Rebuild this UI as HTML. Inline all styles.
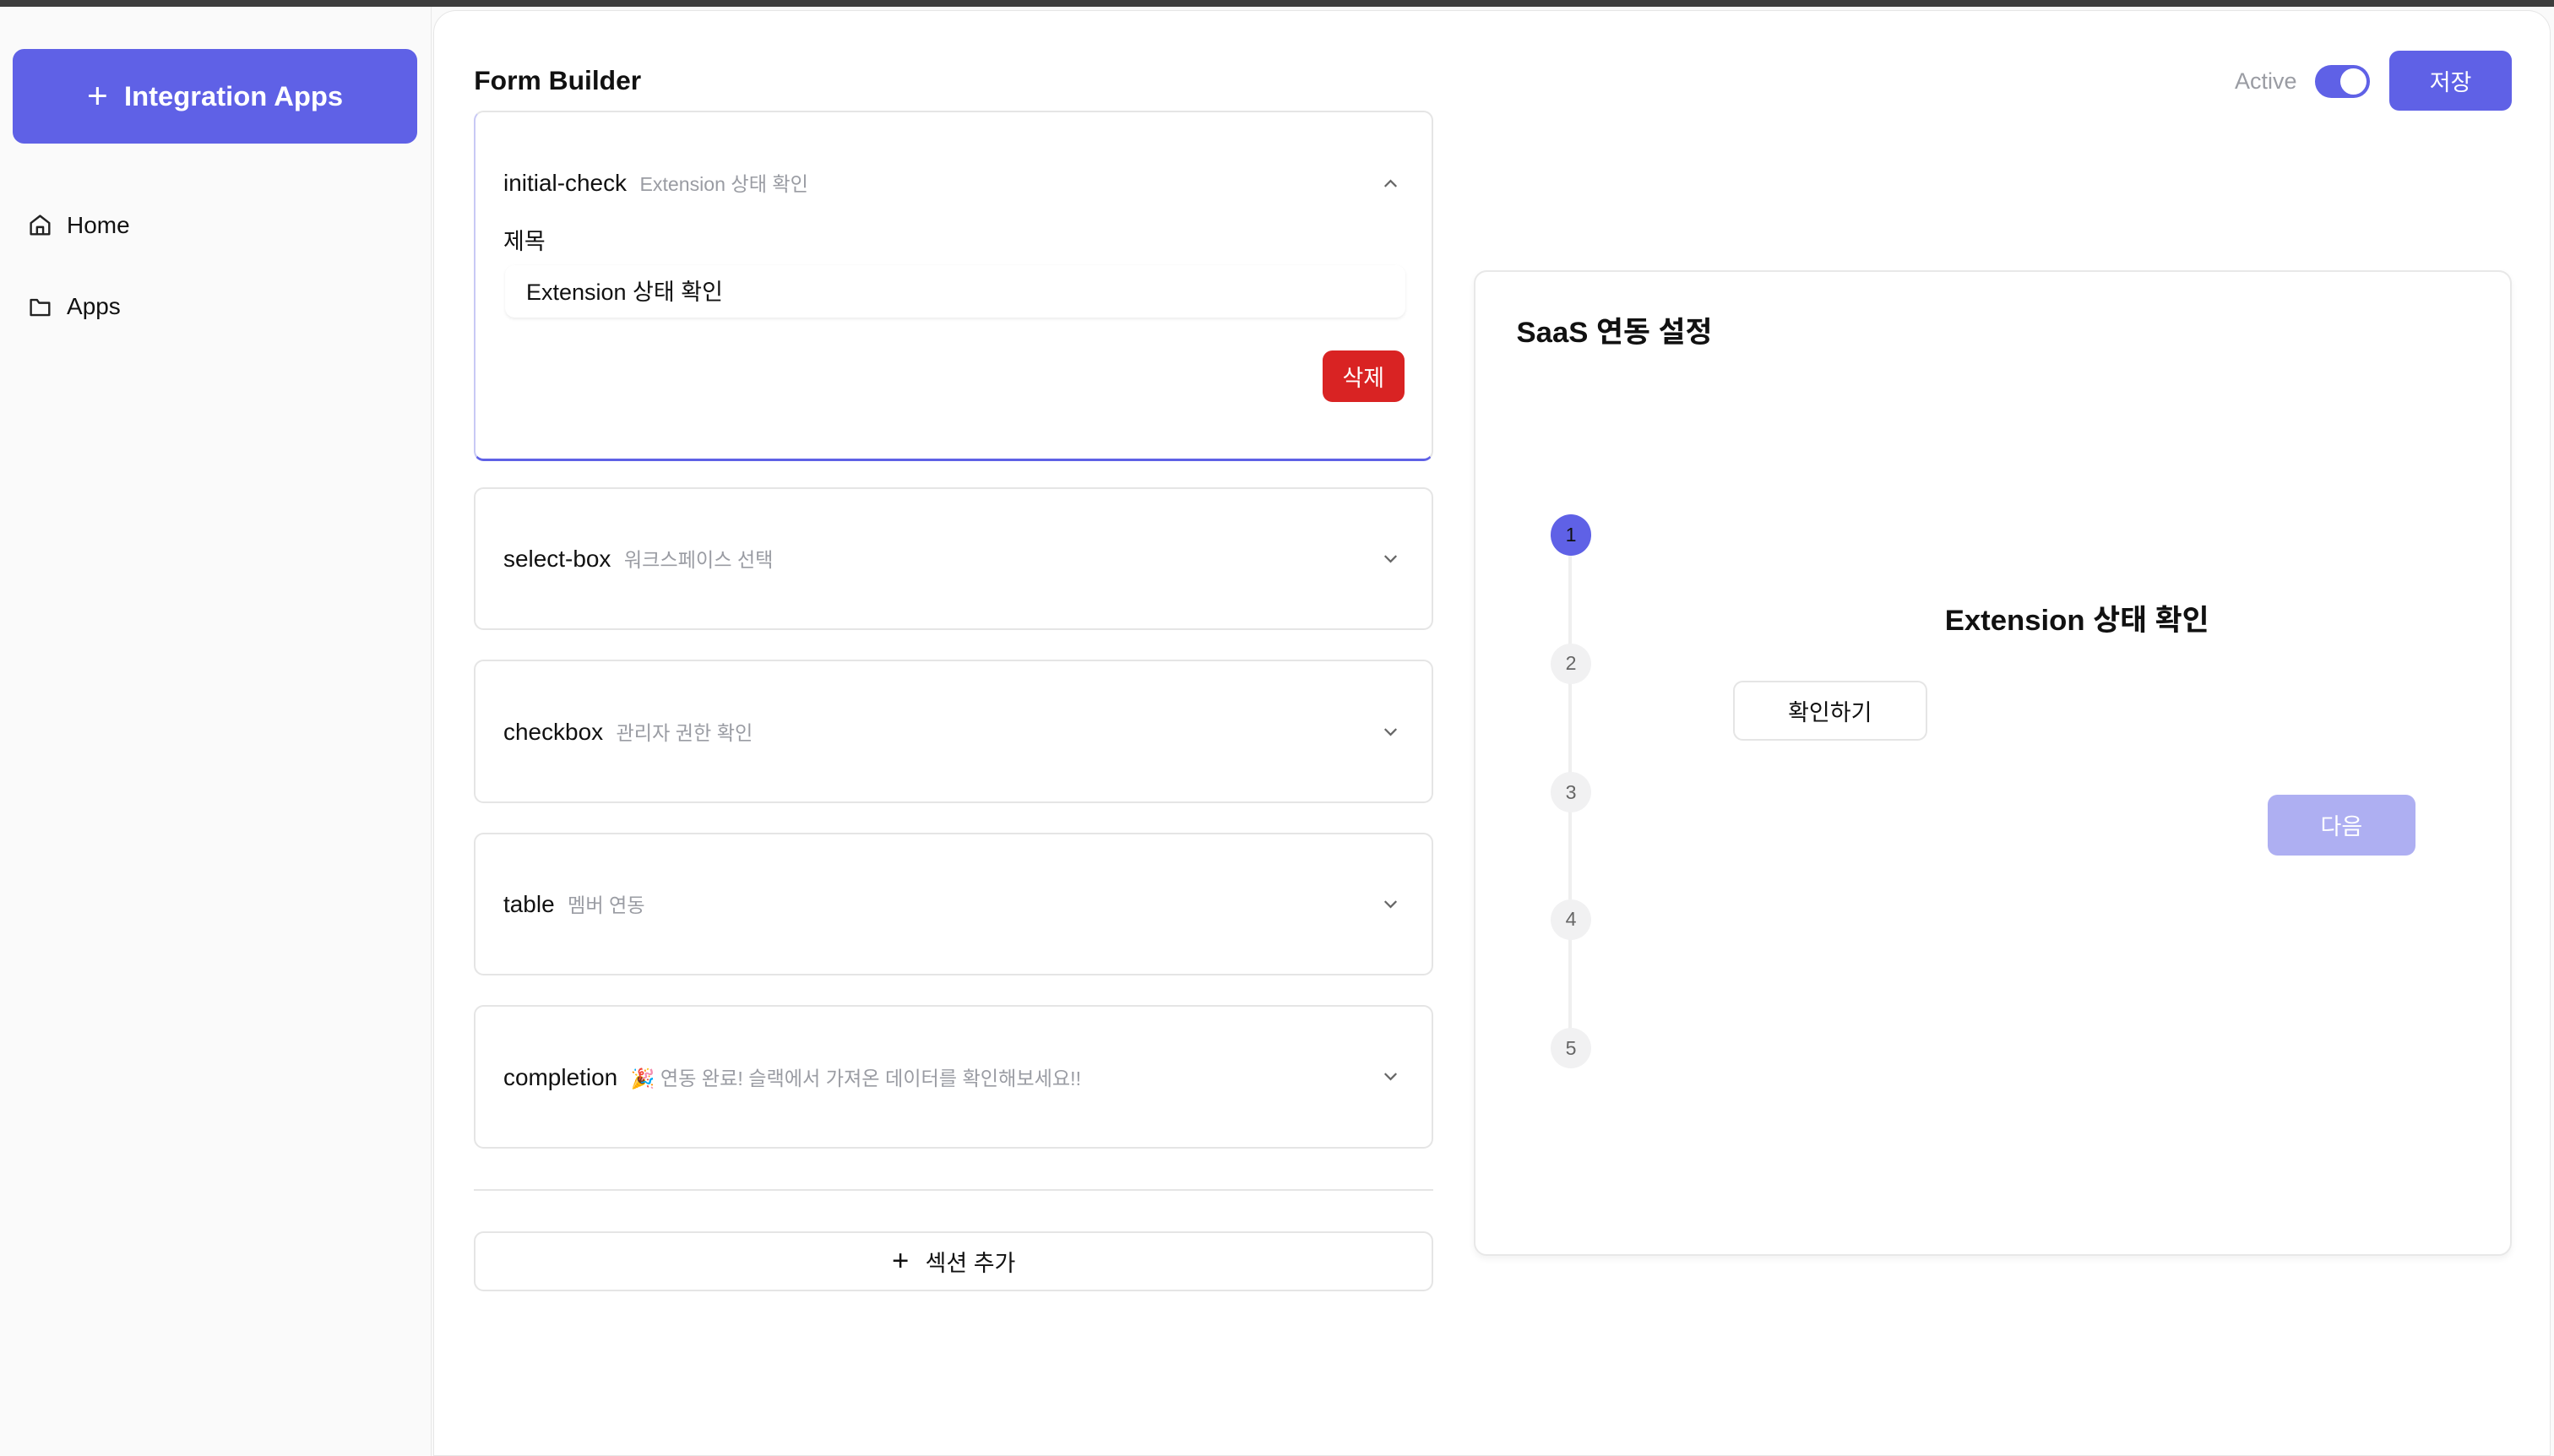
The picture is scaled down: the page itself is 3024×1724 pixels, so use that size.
<!DOCTYPE html>
<html><head><meta charset="utf-8"><style>
html{zoom:1.9286}
*{box-sizing:border-box;margin:0;padding:0}
body{width:1568px;height:894px;background:#fafafa;font-family:"Liberation Sans","Noto Sans CJK KR",sans-serif;color:#111;position:relative;overflow:hidden}
.top{position:absolute;left:0;top:0;width:1568px;height:4px;background:#3d3d3d}
.side{position:absolute;left:0;top:4px;width:265px;height:890px;background:#fafafa;border-right:1px solid #e8e8e8}
.btn-int{position:absolute;left:8px;top:26px;width:248px;height:58px;background:#5f61e6;border-radius:7px;color:#fff;font-size:17px;font-weight:bold;display:flex;align-items:center;justify-content:center;gap:10px}
.nav{position:absolute;left:17px;display:flex;align-items:center;gap:9px;font-size:14.5px}
.main{position:absolute;left:266px;top:6px;width:1300px;height:888px;background:#fff;border:1px solid #e6e6e6;border-radius:14px 14px 0 0}
.abs{position:absolute}
.card{position:absolute;left:291px;width:589px;border:1.5px solid #e5e5e5;border-radius:6px;background:#fff}
.card .h{position:absolute;left:17px;font-size:14.5px;display:flex;align-items:baseline;gap:8px}
.card .h small{font-size:12px;color:#9a9ca3}
.chev{position:absolute;right:18px}
</style></head><body>
<div class="top"></div>
<div class="side">
<div class="btn-int"><span style="font-weight:normal;font-size:22px">+</span>Integration Apps</div>
<div class="nav" style="top:126px"><svg width="15" height="15" viewBox="0 0 24 24" fill="none" stroke="#222" stroke-width="2" stroke-linejoin="round"><path d="M3 10l9-7 9 7v11H3z"/><path d="M9 21v-7h6v7"/></svg>Home</div>
<div class="nav" style="top:176px"><svg width="15" height="15" viewBox="0 0 24 24" fill="none" stroke="#222" stroke-width="2" stroke-linejoin="round"><path d="M3 5h6l2 3h10v12H3z"/></svg>Apps</div>
</div>
<div class="main"></div>
<div class="abs" style="left:291px;top:40px;font-size:16.5px;font-weight:bold">Form Builder</div>
<div class="abs" style="left:1372px;top:42px;font-size:14px;color:#9a9ca3">Active</div>
<div class="abs" style="left:1421px;top:40px;width:34px;height:20px;border-radius:10px;background:#5f61e6"><div style="position:absolute;right:2px;top:2px;width:16px;height:16px;border-radius:50%;background:#fff"></div></div>
<div class="abs" style="left:1467px;top:31px;width:75px;height:37px;border-radius:6px;background:#5f61e6;color:#fff;font-size:14px;display:flex;align-items:center;justify-content:center">저장</div>

<div class="card" style="top:68px;height:215px;border-color:#e5e5e5;border-bottom:2px solid #5f61e6;border-left-color:#c8c9f5">
<div class="h" style="top:34px">initial-check<small>Extension 상태 확인</small></div>
<svg class="chev" style="top:37px" width="14" height="14" viewBox="0 0 24 24" fill="none" stroke="#666" stroke-width="2"><path d="M6 15l6-6 6 6"/></svg>
<div class="abs" style="left:17px;top:68px;font-size:14px">제목</div>
<div class="abs" style="left:18px;top:94px;width:553px;height:32px;border-radius:6px;box-shadow:0 1px 2px rgba(0,0,0,.08);font-size:14px;padding:5px 13px">Extension 상태 확인</div>
<div class="abs" style="left:520px;top:146px;width:50px;height:32px;border-radius:6px;background:#d92323;color:#fff;font-size:14px;display:flex;align-items:center;justify-content:center">삭제</div>
</div>

<div class="card" style="top:299px;height:88px"><div class="h" style="top:34px">select-box<small>워크스페이스 선택</small></div><svg class="chev" style="top:36px" width="14" height="14" viewBox="0 0 24 24" fill="none" stroke="#666" stroke-width="2"><path d="M6 9l6 6 6-6"/></svg></div>
<div class="card" style="top:405px;height:88px"><div class="h" style="top:34px">checkbox<small>관리자 권한 확인</small></div><svg class="chev" style="top:36px" width="14" height="14" viewBox="0 0 24 24" fill="none" stroke="#666" stroke-width="2"><path d="M6 9l6 6 6-6"/></svg></div>
<div class="card" style="top:511px;height:88px"><div class="h" style="top:34px">table<small>멤버 연동</small></div><svg class="chev" style="top:36px" width="14" height="14" viewBox="0 0 24 24" fill="none" stroke="#666" stroke-width="2"><path d="M6 9l6 6 6-6"/></svg></div>
<div class="card" style="top:617px;height:88px"><div class="h" style="top:34px">completion<small>🎉 연동 완료! 슬랙에서 가져온 데이터를 확인해보세요!!</small></div><svg class="chev" style="top:36px" width="14" height="14" viewBox="0 0 24 24" fill="none" stroke="#666" stroke-width="2"><path d="M6 9l6 6 6-6"/></svg></div>
<div class="abs" style="left:291px;top:730px;width:589px;height:1px;background:#e5e5e5"></div>
<div class="card" style="top:756px;height:37px;display:flex;align-items:center;justify-content:center;gap:10px;font-size:14px"><span style="font-size:18px">+</span>섹션 추가</div>

<div class="abs" style="left:905px;top:166px;width:637px;height:605px;border:1.5px solid #e8e8e8;border-radius:8px;background:#fff;box-shadow:0 2px 4px rgba(0,0,0,.05)"></div>
<div class="abs" style="left:931px;top:189px;font-size:18px;font-weight:bold">SaaS 연동 설정</div>
<div class="abs" style="left:963px;top:340px;width:2px;height:300px;background:#efefef"></div>
<div class="abs" style="left:952px;top:316px;width:25px;height:25px;border-radius:50%;background:#5f61e6;color:#111;font-size:12px;display:flex;align-items:center;justify-content:center">1</div>
<div class="abs" style="left:952px;top:395px;width:25px;height:25px;border-radius:50%;background:#f1f1f2;color:#666;font-size:12px;display:flex;align-items:center;justify-content:center">2</div>
<div class="abs" style="left:952px;top:474px;width:25px;height:25px;border-radius:50%;background:#f1f1f2;color:#666;font-size:12px;display:flex;align-items:center;justify-content:center">3</div>
<div class="abs" style="left:952px;top:552px;width:25px;height:25px;border-radius:50%;background:#f1f1f2;color:#666;font-size:12px;display:flex;align-items:center;justify-content:center">4</div>
<div class="abs" style="left:952px;top:631px;width:25px;height:25px;border-radius:50%;background:#f1f1f2;color:#666;font-size:12px;display:flex;align-items:center;justify-content:center">5</div>
<div class="abs" style="left:1194px;top:366px;font-size:18px;font-weight:bold">Extension 상태 확인</div>
<div class="abs" style="left:1064px;top:418px;width:119px;height:37px;border:1.5px solid #e5e5e5;border-radius:6px;font-size:14px;display:flex;align-items:center;justify-content:center">확인하기</div>
<div class="abs" style="left:1392px;top:488px;width:91px;height:37px;border-radius:6px;background:#aeaff2;color:#fff;font-size:14px;display:flex;align-items:center;justify-content:center">다음</div>
</body></html>
